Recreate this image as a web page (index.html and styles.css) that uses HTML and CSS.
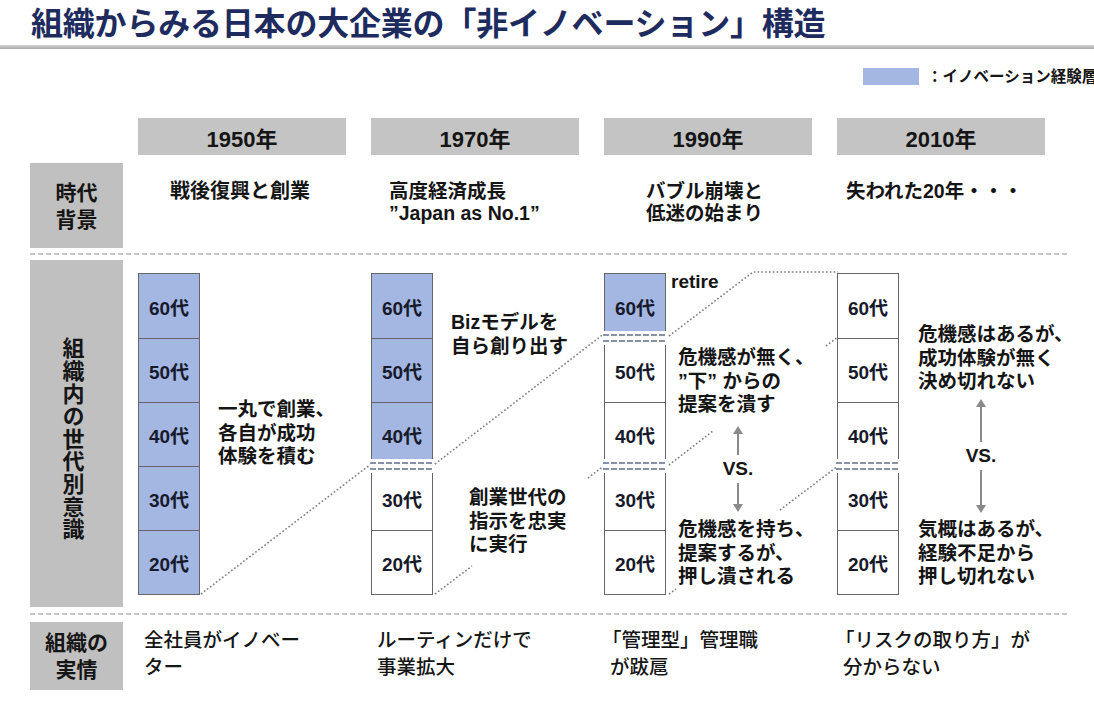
FILE: index.html
```html
<!DOCTYPE html>
<html lang="ja">
<head>
<meta charset="utf-8">
<title>組織からみる日本の大企業の「非イノベーション」構造</title>
<link rel="stylesheet" href="styles.css">
</head>
<body>
<div class="title">組織からみる日本の大企業の「非イノベーション」構造</div>
<div class="rule"></div>
<div class="legend"><span class="legend-box"></span><span class="legend-text">：イノベーション経験層</span></div>

<div class="row row-head">
  <div class="label label-empty"></div>
  <div class="cols">
    <div class="col year">1950年</div>
    <div class="col year">1970年</div>
    <div class="col year">1990年</div>
    <div class="col year">2010年</div>
  </div>
</div>

<div class="row row-era">
  <div class="label">時代<br>背景</div>
  <div class="cols">
    <div class="col era era-1950">戦後復興と創業</div>
    <div class="col era era-1970">高度経済成長<br>”Japan as No.1”</div>
    <div class="col era era-1990">バブル崩壊と<br>低迷の始まり</div>
    <div class="col era era-2010">失われた20年・・・</div>
  </div>
</div>

<div class="divider"></div>

<div class="row row-gen">
  <div class="label label-vert"><span>組織内の世代別意識</span></div>
  <div class="cols">
    <div class="col gen">
      <div class="stack">
        <div class="cell blue">60代</div>
        <div class="cell blue">50代</div>
        <div class="cell blue">40代</div>
        <div class="cell blue">30代</div>
        <div class="cell blue">20代</div>
      </div>
      <div class="notes notes-1950">
        <p class="note">一丸で創業、<br>各自が成功<br>体験を積む</p>
      </div>
    </div>
    <div class="col gen">
      <div class="stack">
        <div class="cell blue">60代</div>
        <div class="cell blue">50代</div>
        <div class="cell blue">40代</div>
        <div class="cell"><span class="sep"></span>30代</div>
        <div class="cell">20代</div>
      </div>
      <div class="notes notes-1970">
        <p class="note note-top">Bizモデルを<br>自ら創り出す</p>
        <p class="note note-bottom">創業世代の<br>指示を忠実<br>に実行</p>
      </div>
    </div>
    <div class="col gen">
      <div class="stack">
        <div class="cell blue">60代</div>
        <div class="cell"><span class="sep"></span>50代</div>
        <div class="cell">40代</div>
        <div class="cell"><span class="sep"></span>30代</div>
        <div class="cell">20代</div>
      </div>
      <div class="notes notes-1990">
        <div class="retire">retire</div>
        <p class="note note-top">危機感が無く、<br>”下” からの<br>提案を潰す</p>
        <div class="vs">
          <svg class="arrow" width="12" height="32" viewBox="0 0 12 32"><polygon points="1,9 6,1 11,9" fill="#8a8a8a"/><rect x="5" y="8" width="2" height="22" fill="#8a8a8a"/></svg>
          <span class="vs-label">VS.</span>
          <svg class="arrow" width="12" height="32" viewBox="0 0 12 32"><rect x="5" y="2" width="2" height="22" fill="#8a8a8a"/><polygon points="1,23 6,31 11,23" fill="#8a8a8a"/></svg>
        </div>
        <p class="note note-bottom">危機感を持ち、<br>提案するが、<br>押し潰される</p>
      </div>
    </div>
    <div class="col gen">
      <div class="stack">
        <div class="cell">60代</div>
        <div class="cell">50代</div>
        <div class="cell">40代</div>
        <div class="cell"><span class="sep"></span>30代</div>
        <div class="cell">20代</div>
      </div>
      <div class="notes notes-2010">
        <p class="note note-top">危機感はあるが、<br>成功体験が無く<br>決め切れない</p>
        <div class="vs">
          <svg class="arrow" width="12" height="46" viewBox="0 0 12 46"><polygon points="1,9 6,1 11,9" fill="#8a8a8a"/><rect x="5" y="8" width="2" height="36" fill="#8a8a8a"/></svg>
          <span class="vs-label">VS.</span>
          <svg class="arrow" width="12" height="46" viewBox="0 0 12 46"><rect x="5" y="2" width="2" height="36" fill="#8a8a8a"/><polygon points="1,37 6,45 11,37" fill="#8a8a8a"/></svg>
        </div>
        <p class="note note-bottom">気概はあるが、<br>経験不足から<br>押し切れない</p>
      </div>
    </div>
  </div>
</div>

<div class="divider divider-bottom"></div>

<div class="row row-fact">
  <div class="label">組織の<br>実情</div>
  <div class="cols">
    <div class="col fact">全社員がイノベー<br>ター</div>
    <div class="col fact">ルーティンだけで<br>事業拡大</div>
    <div class="col fact fact-hang">「管理型」管理職<br>が跋扈</div>
    <div class="col fact fact-hang">「リスクの取り方」が<br>分からない</div>
  </div>
</div>

<svg class="links" width="1094" height="702" viewBox="0 0 1094 702">
  <g fill="none" stroke="#7c7c7c" stroke-width="1.6" stroke-dasharray="1.6 2.2">
    <line x1="201" y1="594" x2="371" y2="464"/>
    <line x1="435" y1="464" x2="605" y2="333"/>
    <line x1="435" y1="594" x2="472" y2="566"/>
    <line x1="588" y1="478" x2="605" y2="465"/>
    <polyline points="669,336 753,272 838,272"/>
    <line x1="669" y1="465" x2="713" y2="431"/>
    <line x1="826" y1="346" x2="838" y2="337"/>
    <line x1="669" y1="594" x2="676" y2="589"/>
    <line x1="780" y1="510" x2="838" y2="466"/>
  </g>
</svg>
</body>
</html>
```

FILE: styles.css
```css
* { box-sizing: border-box; }
html, body { margin: 0; padding: 0; }
body {
  width: 1094px;
  height: 702px;
  overflow: hidden;
  position: relative;
  background: #ffffff;
  color: #151515;
  font-family: "Liberation Sans", "Noto Sans CJK JP", sans-serif;
}

.title {
  height: 45px;
  padding-left: 31px;
  font-family: "Noto Sans CJK JP", sans-serif;
  font-weight: 700;
  font-size: 32px;
  line-height: 42px;
  letter-spacing: -0.2px;
  color: #1e2b5e;
  white-space: nowrap;
}
.rule {
  height: 4px;
  background: linear-gradient(#d2d2d2, #a8a8a8);
}
.legend {
  display: flex;
  align-items: center;
  height: 17px;
  margin-top: 19px;
  padding-left: 863px;
  white-space: nowrap;
  overflow: hidden;
}
.legend-box {
  flex: none;
  width: 56px;
  height: 17px;
  background: #a4b6e2;
}
.legend-text {
  margin-left: 8px;
  font-size: 15.5px;
  font-weight: 700;
  line-height: 17px;
}

.row { display: flex; padding-left: 30px; }
.label {
  flex: none;
  width: 93px;
  margin-right: 15px;
  background: #c0c0c0;
  display: flex;
  align-items: center;
  justify-content: center;
  text-align: center;
  font-weight: 700;
  font-size: 21px;
  line-height: 27px;
}
.cols { display: flex; gap: 25px; }
.col { flex: none; width: 208px; }

.row-head { margin-top: 33px; height: 37px; }
.label-empty { background: none; }
.year {
  background: #c4c4c4;
  display: flex;
  align-items: center;
  justify-content: center;
  font-weight: 700;
  font-size: 22px;
}

.row-era { margin-top: 8px; height: 85px; }
.era {
  padding-top: 17px;
  font-weight: 700;
  font-size: 19.5px;
  line-height: 22px;
  white-space: nowrap;
}
.era-1950 { padding-left: 32px; font-size: 20px; }
.era-1970 { padding-left: 18px; }
.era-1990 { padding-left: 42px; }
.era-2010 { padding-left: 9px; }

.divider {
  width: 1040px;
  height: 2px;
  margin-left: 30px;
  margin-top: 5px;
  background: repeating-linear-gradient(90deg, #c6c6c6 0 5px, transparent 5px 8px);
}
.divider-bottom { margin-top: 6px; }

.row-gen { margin-top: 5px; height: 347px; }
.label-vert { padding-right: 12px; padding-top: 10px; }
.label-vert span {
  writing-mode: vertical-rl;
  text-orientation: upright;
  font-size: 22px;
  line-height: 22px;
  letter-spacing: 0.6px;
}

.gen { display: flex; }
.stack {
  flex: none;
  width: 62px;
  height: 322px;
  margin-top: 13px;
  border: 1px solid #666666;
}
.cell {
  position: relative;
  height: 64px;
  display: flex;
  align-items: center;
  justify-content: center;
  background: #ffffff;
  color: #171a2b;
  font-weight: 700;
  font-size: 19px;
}
.cell + .cell { border-top: 1px solid #666666; }
.cell.blue { background: #a4b6e2; }
.sep {
  position: absolute;
  left: -2px;
  right: -2px;
  top: -8px;
  height: 14px;
  background: #ffffff;
  z-index: 1;
}
.sep::before,
.sep::after {
  content: "";
  position: absolute;
  left: 0;
  right: 0;
  height: 2px;
  background: repeating-linear-gradient(90deg, #8891a8 0 6px, transparent 6px 8px);
}
.sep::before { top: 3px; }
.sep::after { top: 9px; }

.notes { flex: 1; display: flex; flex-direction: column; }
.note {
  margin: 0;
  font-weight: 700;
  font-size: 19.5px;
  line-height: 23.5px;
  white-space: nowrap;
}
.notes-1950 { justify-content: center; padding-left: 18px; }
.notes-1970 { padding-left: 18px; }
.notes-1970 .note-top { margin-top: 51px; }
.notes-1970 .note-bottom { margin-top: 128px; margin-left: 18px; }

.notes-1990 { padding-left: 12px; }
.retire {
  margin-top: 11px;
  margin-left: -7px;
  font-weight: 700;
  font-size: 19px;
  line-height: 22px;
}
.notes-1990 .note-top { margin-top: 53px; }
.notes-1990 .vs { margin-left: 35px; margin-top: 8.5px; }
.notes-1990 .note-bottom { margin-top: 5px; }

.notes-2010 { padding-left: 19px; }
.notes-2010 .note-top { margin-top: 63px; }
.notes-2010 .vs { margin-left: 38px; margin-top: 4.5px; }
.notes-2010 .note-bottom { margin-top: 4px; }

.vs {
  width: 50px;
  display: flex;
  flex-direction: column;
  align-items: center;
}
.arrow { display: block; }
.vs-label {
  font-weight: 700;
  font-size: 19px;
  line-height: 24px;
}

.row-fact { margin-top: 7px; height: 68px; }
.fact {
  padding-top: 5px;
  padding-left: 6px;
  font-weight: 500;
  font-size: 19.5px;
  line-height: 27px;
  white-space: nowrap;
}
.fact-hang { text-indent: -8px; }

.links {
  position: absolute;
  left: 0;
  top: 0;
  pointer-events: none;
}
```
